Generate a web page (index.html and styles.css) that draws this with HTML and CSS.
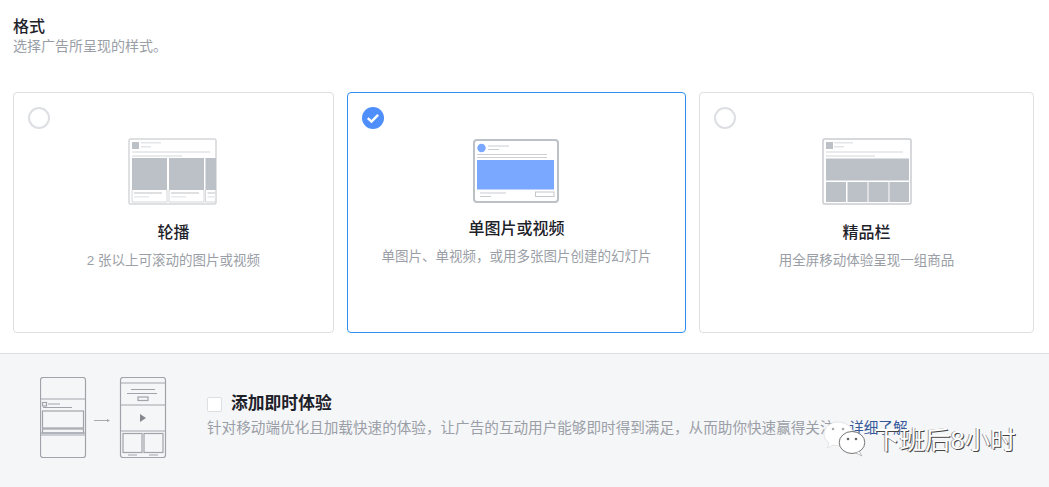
FILE: index.html
```html
<!DOCTYPE html>
<html lang="zh">
<head>
<meta charset="utf-8">
<title>格式</title>
<link rel="stylesheet" href="styles.css">
</head>
<body>
<main class="page">
  <section class="format">
    <h2 class="format-title">格式</h2>
    <p class="format-sub">选择广告所呈现的样式。</p>
    <div class="cards">
      <article class="card card-a">
        <span class="radio"></span>
        <svg class="thumb thumb-a" width="90" height="68" viewBox="0 0 90 68">
          <rect x="1" y="1" width="87" height="65" rx="1.5" fill="#fff" stroke="#d5d6d9" stroke-width="1.5"/>
          <rect x="4" y="4" width="7" height="7" fill="#bcc0c7"/>
          <rect x="13" y="4" width="20" height="1.5" fill="#e4e5e7"/>
          <rect x="13" y="8" width="10" height="1.5" fill="#e4e5e7"/>
          <rect x="4" y="13" width="78" height="2" fill="#e9eaec"/>
          <rect x="4" y="17" width="50" height="2" fill="#e9eaec"/>
          <rect x="4" y="20" width="35" height="32" fill="#bcc0c7"/>
          <rect x="41" y="20" width="35" height="32" fill="#bcc0c7"/>
          <rect x="77.500" y="20" width="10.500" height="32" fill="#bcc0c7"/>
          <path d="M4 52V64H39V52M41 52V64H76V52M77.500 52V64H88" fill="none" stroke="#d5d6d9"/>
          <rect x="6" y="54" width="28" height="2" fill="#dfe0e2"/>
          <rect x="6" y="58" width="15" height="1.5" fill="#e9eaec"/>
          <rect x="43" y="54" width="28" height="2" fill="#dfe0e2"/>
          <rect x="43" y="58" width="15" height="1.5" fill="#e9eaec"/>
          <rect x="79.500" y="54" width="8.500" height="2" fill="#dfe0e2"/>
          <rect x="79.500" y="58" width="8.500" height="1.5" fill="#e9eaec"/>
        </svg>
        <h3 class="card-title">轮播</h3>
        <p class="card-sub">2 张以上可滚动的图片或视频</p>
      </article>
      <article class="card card-b is-selected">
        <span class="radio radio-on">
          <svg width="22" height="22" viewBox="0 0 22 22"><path d="M5.800 11.200l3.700 3.400 6.600-6.800" fill="none" stroke="#fff" stroke-width="2.400"/></svg>
        </span>
        <svg class="thumb thumb-b" width="87" height="65" viewBox="0 0 87 65">
          <rect x="1" y="1" width="84" height="62" rx="3" fill="#fff" stroke="#bcc0c7" stroke-width="2"/>
          <circle cx="8.500" cy="9" r="4.200" fill="#7aa7ff"/>
          <rect x="15" y="6.500" width="21" height="1" fill="#c9ccd1"/>
          <rect x="15" y="10" width="11" height="1" fill="#c9ccd1"/>
          <rect x="4" y="15" width="70" height="1" fill="#ccced3"/>
          <rect x="4" y="18" width="70" height="1" fill="#ccced3"/>
          <rect x="4" y="21" width="77" height="29.500" fill="#7aa7ff"/>
          <rect x="7" y="53.500" width="26" height="1" fill="#c9ccd1"/>
          <rect x="7" y="57" width="11" height="1" fill="#c9ccd1"/>
          <rect x="62.500" y="53" width="18.500" height="4.500" fill="none" stroke="#c4c7cc"/>
        </svg>
        <h3 class="card-title">单图片或视频</h3>
        <p class="card-sub">单图片、单视频，或用多张图片创建的幻灯片</p>
      </article>
      <article class="card card-c">
        <span class="radio"></span>
        <svg class="thumb thumb-c" width="90" height="68" viewBox="0 0 90 68">
          <rect x="1" y="1" width="88" height="65" rx="1.5" fill="#fff" stroke="#c9cbcf" stroke-width="1.500"/>
          <rect x="4" y="4" width="7" height="7" fill="#bcc0c7"/>
          <rect x="12" y="4" width="19" height="1.500" fill="#e4e5e7"/>
          <rect x="12" y="8" width="10" height="1.500" fill="#e4e5e7"/>
          <rect x="4" y="13" width="77" height="2" fill="#e9eaec"/>
          <rect x="4" y="17" width="49" height="2" fill="#e9eaec"/>
          <rect x="4" y="20.500" width="83" height="22" fill="#bcc0c7"/>
          <rect x="4" y="44" width="20" height="20" fill="#bcc0c7"/>
          <rect x="25.500" y="44" width="20" height="20" fill="#bcc0c7"/>
          <rect x="46.500" y="44" width="20" height="20" fill="#bcc0c7"/>
          <rect x="67.500" y="44" width="19.500" height="20" fill="#bcc0c7"/>
        </svg>
        <h3 class="card-title">精品栏</h3>
        <p class="card-sub">用全屏移动体验呈现一组商品</p>
      </article>
    </div>
  </section>
  <section class="instant">
    <svg class="flow" width="128" height="82" viewBox="0 0 128 82">
      <g fill="none" stroke="#a0a3aa" stroke-width="1.200">
        <rect x=".5" y=".5" width="45" height="80" rx="2.500"/>
        <path d="M.5 22h45M.5 56h45M.5 58h45"/>
        <rect x="2.500" y="25.500" width="4" height="3.500"/>
        <path d="M8 27h12M3 30.500h29"/>
        <rect x="2.500" y="34" width="41" height="17"/>
        <rect x="2.500" y="52" width="41" height="4"/>
        <path d="M54 43.500h15" stroke="#a8abb1" stroke-width="1"/>
        <rect x="80.500" y=".5" width="45" height="80" rx="2.500"/>
        <path d="M80.500 6h45M80.500 28h45M80.500 54h45M91 12.500h24M87 16.500h30"/>
        <rect x="98" y="20" width="10" height="3.500"/>
        <rect x="83" y="56.500" width="19" height="19"/>
        <rect x="104" y="56.500" width="19" height="19"/>
        <path d="M88 78h9M109 78h9"/>
      </g>
      <path d="M67 42l3 1.500-3 1.500z" fill="#a0a3aa"/>
      <path d="M100 37l6 4-6 4z" fill="#85888f"/>
    </svg>
    <div class="instant-text">
      <div class="instant-head">
        <span class="check"></span>
        <h3 class="instant-title">添加即时体验</h3>
      </div>
      <p class="instant-sub">针对移动端优化且加载快速的体验，让广告的互动用户能够即时得到满足，从而助你快速赢得关注。<a class="learn" href="#">详细了解</a></p>
    </div>
  </section>
  <div class="watermark">
    <svg class="wechat" width="44" height="38" viewBox="0 0 44 38">
      <path d="M15 1C7 1 1 6.500 1 13c0 4 2 7 5 9l-1.500 5 5.500-3c1.500.5 3 .7 5 .7 1 0 1.500 0 2-.1-.4-1.300-.6-2-.6-3.100 0-6 5.400-10.500 12.500-10.500h1.500C28 5 22 1 15 1z" fill="#fff" stroke="#ccc" stroke-width=".5"/>
      <ellipse cx="29" cy="21.500" rx="12.800" ry="11" fill="#fff" stroke="#777" stroke-width="1"/>
      <path d="M36 30l3 5-6-3z" fill="#fff" stroke="#999" stroke-width=".6"/>
      <circle cx="25" cy="18" r="1.300" fill="#666"/>
      <circle cx="33" cy="18" r="1.300" fill="#666"/>
      <circle cx="10" cy="8" r="1.300" fill="#aaa"/>
      <circle cx="20" cy="8" r="1.300" fill="#aaa"/>
    </svg>
    <span class="wm-text">下班后8小时</span>
  </div>
</main>
</body>
</html>
```
FILE: styles.css
```css
* { box-sizing: border-box; }
html, body { margin: 0; padding: 0; height: 100%; background: #fff; }
body {
  font-family: "Liberation Sans", "Noto Sans CJK SC", sans-serif;
  overflow: hidden;
}
.page { position: relative; width: 1049px; height: 487px; display: flex; flex-direction: column; }
.format { padding: 17px 15px 0 13px; height: 353px; }
.format-title { margin: 0; font-size: 16px; line-height: 20px; font-weight: 500; color: #1d2129; }
.format-sub { margin: 0; font-size: 14px; line-height: 18px; color: #9a9ea6; }
.cards { display: flex; gap: 13px; margin-top: 37px; }
.card {
  height: 241px;
  background: #fff;
  border: 1px solid #dddfe2;
  border-radius: 4px;
  display: flex;
  flex-direction: column;
  align-items: center;
  padding: 14px 14px 0;
}
.card-a { width: 321px; }
.card-b { width: 339px; }
.card-c { width: 335px; }
.is-selected { border-color: #2f8ff0; }
.radio {
  align-self: flex-start;
  width: 22px;
  height: 22px;
  flex: none;
  border: 2px solid #dddfe2;
  border-radius: 50%;
  background: #fff;
}
.radio-on { border: 0; background: #4f8ffb; }
.radio-on svg { display: block; }
.thumb { display: block; flex: none; }
.thumb-a { margin-top: 9px; transform: translateX(-1px); }
.thumb-c { margin-top: 9px; }
.thumb-b { margin-top: 10px; }
.card-title { margin: 14px 0 0; font-size: 16px; line-height: 24px; font-weight: 500; color: #1d2129; }
.thumb-a + .card-title, .thumb-c + .card-title { margin-top: 15px; }
.thumb-b + .card-title { margin-top: 13px; }
.card-sub { margin: 6px 0 0; font-size: 13.5px; line-height: 20px; color: #9a9ea6; }
.instant {
  flex: 1;
  display: flex;
  align-items: flex-start;
  background: #f5f6f8;
  border-top: 1px solid #dddfe2;
  padding: 23px 0 0 40px;
}
.flow { flex: none; display: block; }
.instant-text { margin: 15px 0 0 39px; }
.instant-head { display: flex; align-items: center; gap: 9px; }
.check { width: 15px; height: 15px; background: #fff; border: 1px solid #dddfe2; border-radius: 2px; flex: none; }
.instant-title { margin: 0; font-size: 16.800px; line-height: 24px; font-weight: 700; color: #1d2129; }
.instant-sub { margin: 2px 0 0; font-size: 14.600px; line-height: 20px; color: #9a9ea6; white-space: nowrap; }
.learn { color: #365899; text-decoration: none; }
.watermark { position: absolute; left: 823px; top: 420px; display: flex; align-items: center; }
.wechat { display: block; margin-right: 7px; }
.wm-text {
  font-size: 25.500px;
  line-height: 40px;
  color: #fff;
  text-shadow: 1px 1px 0 #444, -1px 0 0 #999;
  white-space: nowrap;
}
```
